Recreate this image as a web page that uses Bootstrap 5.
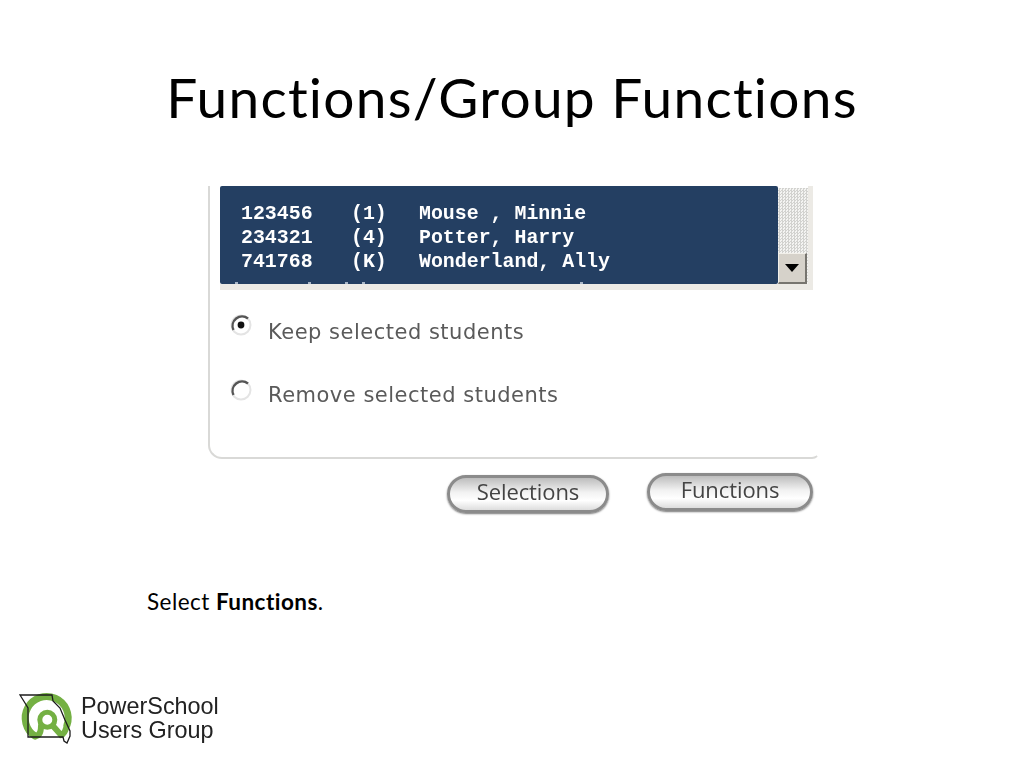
<!doctype html>
<html lang="en"><head><meta charset="utf-8"><title>Functions/Group Functions</title>
<link href="https://cdn.jsdelivr.net/npm/bootstrap@5.3.0/dist/css/bootstrap.min.css" rel="stylesheet">
<style>
html,body{background:#fff;margin:0}
.slide-page{width:1024px;height:768px;overflow:hidden;font-family:Lato,"Liberation Sans",sans-serif;color:#000;font-variant-ligatures:none}
.slide-title{font:400 55px/64px Lato,sans-serif;letter-spacing:1.25px;text-align:center;margin:0;padding-top:65px;height:186px;font-variant-ligatures:none}
.shot-panel{width:612px;margin-left:208px;height:273px;padding-left:10px;border:2px solid #d9d9d7;border-top:0;border-right-color:transparent;border-radius:0 0 8px 14px;filter:blur(.35px)}
.list-frame{width:593px;height:104px;border-right:5px solid #eceae5;border-bottom:6px solid #eceae5}
.list-blue{width:558px;height:98px;color:#fff;font:700 19.9px/24px "Liberation Mono",monospace;padding:16px 0 0 21px;overflow:hidden;border-radius:2px;
background:linear-gradient(#a9b7c8,#a9b7c8) 15px 100%/3px 2px no-repeat,linear-gradient(#a9b7c8,#a9b7c8) 88px 100%/3px 2px no-repeat,linear-gradient(#a9b7c8,#a9b7c8) 125px 100%/3px 2px no-repeat,linear-gradient(#a9b7c8,#a9b7c8) 142px 100%/3px 2px no-repeat,linear-gradient(#a9b7c8,#a9b7c8) 360px 100%/3px 2px no-repeat,#243f62}
.id-cell{width:110px}
.grade-cell{width:68px}
.scroll-track{width:30px;margin-top:2px;background:repeating-conic-gradient(#d2d2cf 0 25%,#f4f4f2 0 50%) 0 0/3px 3px}
.scroll-btn{width:29px;height:31px;background:#d6d2ca;border-top:1px solid #f2f0ea;border-left:1px solid #f2f0ea;border-right:2px solid #77756f;border-bottom:2px solid #77756f}
.radio-row{color:#5a5a5a;font:400 21px/24px "DejaVu Sans",sans-serif;letter-spacing:.5px;gap:15px;filter:blur(.35px)}
.radio-row svg{margin-top:-5px;flex:none}
.radio-one{margin:30px 0 0 9px}
.radio-one svg{margin-top:-7px}
.radio-two{margin:39px 0 0 9px}
.btn-row{width:612px;margin-left:208px;height:62px;padding-left:239px;gap:38px}
.pill-btn{height:38px;border-radius:19px;border:3px solid #8b8b8b;padding:0 0 8px;color:#444;font:400 22px/26px "Open Sans",sans-serif;background:linear-gradient(#bdbdbd,#f2f2f2 45%,#fff 70%,#ddd);box-shadow:0 1px 2px #777;filter:blur(.6px);letter-spacing:-.1px}
.pill-btn:hover{color:#444;border-color:#8b8b8b}
.pill-a{width:162px;margin-top:16px}
.pill-b{width:166px;margin-top:14px}
.caption-line{font:400 22.5px/26px Lato,sans-serif;letter-spacing:.45px;margin:0;padding:68px 0 0 147px;height:167px}
.logo-row{margin-left:15px;gap:1px;height:60px}
.logo-art{filter:blur(.4px)}
.logo-words{font:400 23.4px/24px "Liberation Sans",sans-serif;color:#222;filter:blur(.3px)}
</style></head>
<body>
<main class="slide-page d-flex flex-column">
<h1 class="slide-title">Functions/Group Functions</h1>
<section class="shot-panel">
 <div class="list-frame d-flex">
  <div class="list-blue">
   <div class="d-flex"><span class="id-cell">123456</span><span class="grade-cell">(1)</span><span>Mouse , Minnie</span></div>
   <div class="d-flex"><span class="id-cell">234321</span><span class="grade-cell">(4)</span><span>Potter, Harry</span></div>
   <div class="d-flex"><span class="id-cell">741768</span><span class="grade-cell">(K)</span><span>Wonderland, Ally</span></div>
  </div>
  <div class="scroll-track d-flex align-items-end">
   <div class="scroll-btn d-flex align-items-center justify-content-center">
    <svg width="14" height="8" viewBox="0 0 14 8"><path d="M0 0h14L7 8z" fill="#000"/></svg>
   </div>
  </div>
 </div>
 <div class="radio-row radio-one d-flex align-items-start">
  <svg width="24" height="24" viewBox="0 0 24 24"><circle cx="12" cy="12" r="9.5" fill="#fff" stroke="#e4e4e4" stroke-width="2"/><path d="M4.500 17A9.500 9.500 0 0 1 19 5.500" fill="none" stroke="#555" stroke-width="2.4"/><circle cx="12" cy="12" r="3.4" fill="#111"/></svg>
  <span>Keep selected students</span>
 </div>
 <div class="radio-row radio-two d-flex align-items-start">
  <svg width="24" height="24" viewBox="0 0 24 24"><circle cx="12" cy="12" r="9.5" fill="#fff" stroke="#e4e4e4" stroke-width="2"/><path d="M4.500 17A9.500 9.500 0 0 1 19 5.500" fill="none" stroke="#555" stroke-width="2.4"/></svg>
  <span>Remove selected students</span>
 </div>
</section>
<div class="btn-row d-flex align-items-start">
 <button type="button" class="btn pill-btn pill-a">Selections</button>
 <button type="button" class="btn pill-btn pill-b">Functions</button>
</div>
<p class="caption-line">Select <b>Functions</b>.</p>
<div class="logo-row d-flex align-items-center">
 <svg class="logo-art" width="65" height="60" viewBox="0 0 65 60">
  <g fill="none" stroke="#74b043" stroke-linecap="round">
   <path stroke-width="7" d="M52 37A21.500 21.500 0 1 0 20 48"/>
   <path stroke-width="6" d="M20 48Q26 48 26 38"/>
   <circle stroke-width="5" cx="32.300" cy="31.700" r="7.500"/>
   <path stroke-width="6" d="M38 38L46 47Q50 46 52 37"/>
  </g>
  <path d="M5 7H37L38 13 45 20 50 32 55 43V48L52 55 49 53 48 49H13V20L10 15Z" fill="none" stroke="#1c1c1c" stroke-width="1.3"/>
 </svg>
 <div class="logo-words">PowerSchool<br>Users Group</div>
</div>
</main>
<script src="https://cdn.jsdelivr.net/npm/bootstrap@5.3.0/dist/js/bootstrap.bundle.min.js"></script>
</body></html>
